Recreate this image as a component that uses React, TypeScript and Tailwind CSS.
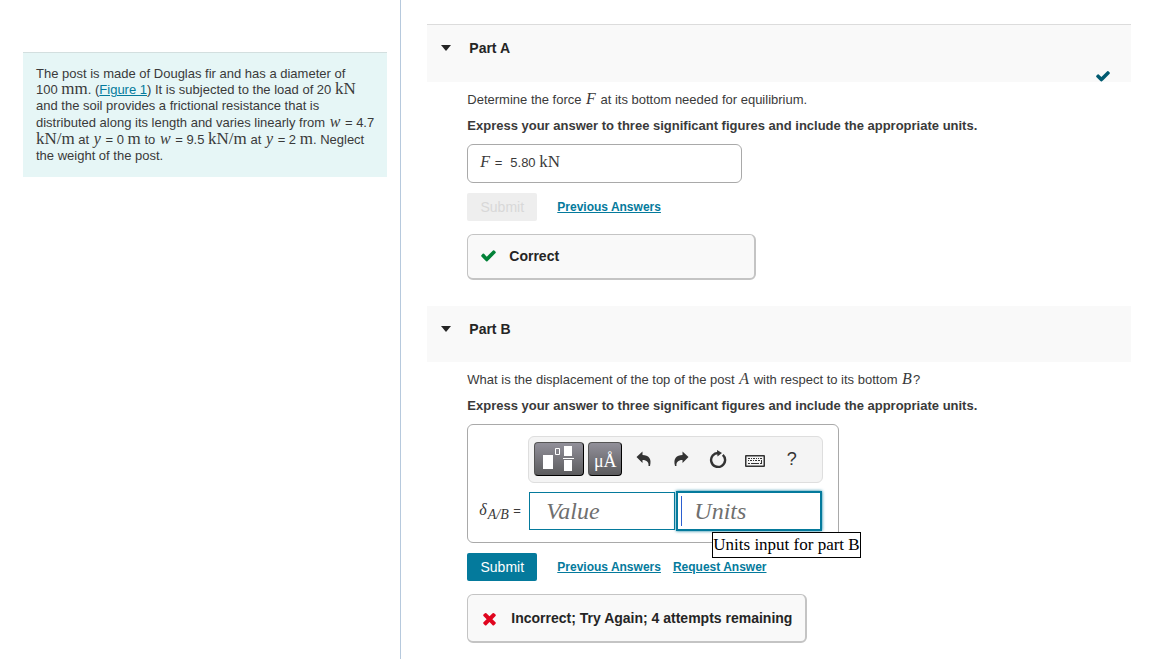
import React from 'react';

const CHECK_PATH =
  'M1671 566q0 40-28 68l-724 724-136 136q-28 28-68 28t-68-28l-136-136-362-362q-28-28-28-68t28-68l136-136q28-28 68-28t68 28l294 295 656-657q28-28 68-28t68 28l136 136q28 28 28 68z';
const TIMES_PATH =
  'M1490 1322q0 40-28 68l-136 136q-28 28-68 28t-68-28l-294-294-294 294q-28 28-68 28t-68-28l-136-136q-28-28-28-68t28-68l294-294-294-294q-28-28-28-68t28-68l136-136q28-28 68-28t68 28l294 294 294-294q28-28 68-28t68 28l136 136q28 28 28 68t-28 68l-294 294 294 294q28 28 28 68z';

type ChildrenProps = { children: React.ReactNode };

// Math variable, e.g. w, y, F
const Var: React.FC<ChildrenProps> = ({ children }) => (
  <i className="mx-px font-['Liberation_Serif',serif] text-[16px] leading-none">{children}</i>
);

// Upright unit, e.g. kN, m
const Unit: React.FC<ChildrenProps> = ({ children }) => (
  <span className="font-['Liberation_Serif',serif] text-[17px] leading-3">{children}</span>
);

const TextLink: React.FC<ChildrenProps> = ({ children }) => (
  <a href="#" className="text-[12px] leading-4 font-bold text-[#047a9c] underline">
    {children}
  </a>
);

const CheckIcon: React.FC<{ className: string }> = ({ className }) => (
  <svg viewBox="0 0 1792 1792" className={className} fill="currentColor" aria-hidden="true">
    <path d={CHECK_PATH} />
  </svg>
);

interface PartProps {
  title: string;
  completed?: boolean;
  children: React.ReactNode;
}

const Part: React.FC<PartProps> = ({ title, completed, children }) => (
  <section>
    <header
      className={`flex justify-between bg-[#f9f9f9] pl-[14px] pr-5 ${
        completed ? 'h-[58px] border-t border-[#dcdcdc]' : 'h-14'
      }`}
    >
      <button type="button" className="flex h-[46px] items-center gap-[18px] text-[14px] font-bold text-[#252525]">
        <svg viewBox="0 0 10 6" className="h-[6px] w-[10px]" fill="currentColor" aria-hidden="true">
          <path d="M0 0h10L5 6z" />
        </svg>
        {title}
      </button>
      {completed && <CheckIcon className="-mb-0.5 h-4 w-4 self-end text-[#005a70]" />}
    </header>
    <div className="pt-[9px] pl-10">{children}</div>
  </section>
);

const toolButton =
  'flex h-[34px] items-center justify-center rounded-[4px] border border-black border-t-[#555] border-l-[#555] bg-linear-to-b from-[#92909a] to-[#5c5c5e] text-white';
const iconButton = 'flex h-[34px] w-[37px] items-center justify-center text-[#333]';

const MathToolbar: React.FC = () => (
  <div
    role="toolbar"
    className="flex h-[47px] items-center rounded-[6px] border border-[#dedede] bg-[#f4f4f4] pb-px pl-[5px]"
  >
    <button type="button" aria-label="Templates" className={`${toolButton} w-[50px]`}>
      <svg viewBox="0 0 34 26" className="h-[26px] w-[34px]" aria-hidden="true">
        <path fill="#fff" d="M1 9h10v14H1zM22 0h8v10h-8zM22 14h8v11h-8zM21 12h11v1H21z" />
        <path fill="none" stroke="#fff" d="M13.5 2.500h4v6h-4z" />
      </svg>
    </button>
    <button
      type="button"
      aria-label="Symbols"
      className={`${toolButton} ml-1 w-[34px] pt-1 font-['Liberation_Serif',serif] text-[18px]`}
    >
      μÅ
    </button>
    <button type="button" aria-label="Undo" className={`${iconButton} ml-[3px]`}>
      <svg viewBox="0 0 16 16" className="h-4 w-4" fill="currentColor" aria-hidden="true">
        <path d="M.5 6l6-5.500V4c6 0 9.500 3.500 7.500 11h-1.500C13 11.500 11 9 6.500 9v3z" />
      </svg>
    </button>
    <button type="button" aria-label="Redo" className={iconButton}>
      <svg viewBox="0 0 16 16" className="h-4 w-4" fill="currentColor" aria-hidden="true">
        <path d="M15.500 6l-6-5.500V4c-6 0-9.500 3.500-7.500 11h1.500C3 11.500 5 9 9.500 9v3z" />
      </svg>
    </button>
    <button type="button" aria-label="Reset" className={iconButton}>
      <svg viewBox="0 0 18 18" className="h-[18px] w-[18px]" aria-hidden="true">
        <path d="M13.800 4.800A7 7 0 1 1 9.500 3" fill="none" stroke="currentColor" strokeWidth="2.4" />
        <path d="M8 0l5 3-4.500 3.500z" fill="currentColor" />
      </svg>
    </button>
    <button type="button" aria-label="Keyboard" className={iconButton}>
      <svg viewBox="0 0 20 12" className="mt-1 h-3 w-5" fill="currentColor" aria-hidden="true">
        <path d="M1 0h18q1 0 1 1v10q0 1-1 1H1q-1 0-1-1V1q0-1 1-1zM1.500 1.500v9h17v-9z" fillRule="evenodd" />
        <path d="M3 3h2v1H3zM6 3h1v1H6zM8 3h2v1H8zM11 3h1v1h-1zM13 3h1v1h-1zM15 3h2v1h-2zM3 5h1v1H3zM5 5h2v1H5zM8 5h1v1H8zM10 5h2v1h-2zM13 5h2v1h-2zM16 5h1v3h-1zM3 8h2v1H3zM6 8h8v1H6zM15 8h2v1h-2z" />
      </svg>
    </button>
    <button type="button" aria-label="Help" className={`${iconButton} text-[18px]`}>
      ?
    </button>
  </div>
);

const inputText =
  "min-w-0 flex-1 bg-transparent font-['Liberation_Serif',serif] text-[24px] italic outline-none placeholder:text-[#6f6f6f] placeholder:opacity-100";

export default function App() {
  return (
    <div className="flex min-h-screen bg-white font-['Liberation_Sans',Arial,sans-serif] text-[13px] leading-[18px] text-[#3a3a3a]">
      <aside className="w-[34.3%] shrink-0 border-r border-[#b6c9dd] pt-[52px] pr-[13px] pl-[23px]">
        <div className="border-t border-[#d3dfdf] bg-[#e6f6f6] pt-[13px] pr-1 pb-[13px] pl-[13px] leading-4">
          The post is made of Douglas fir and has a diameter of <br />
          100 <Unit>mm</Unit>. (
          <a href="#" className="text-[#047a9c] underline">
            Figure 1
          </a>
          ) It is subjected to the load of 20 <Unit>kN</Unit>
          <br />
          and the soil provides a frictional resistance that is
          <br />
          distributed along its length and varies linearly from <Var>w</Var> = 4.7
          <br />
          <Unit>kN/m</Unit> at <Var>y</Var> = 0 <Unit>m</Unit> to <Var>w</Var> = 9.5 <Unit>kN/m</Unit> at{' '}
          <Var>y</Var> = 2 <Unit>m</Unit>. Neglect
          <br />
          the weight of the post.
        </div>
      </aside>

      <main className="min-w-0 flex-1 pt-6 pr-[39px] pl-[26px]">
        <Part title="Part A" completed>
          <p>
            Determine the force <Var>F</Var> at its bottom needed for equilibrium.
          </p>
          <p className="mt-2 font-bold">
            Express your answer to three significant figures and include the appropriate units.
          </p>
          <div className="mt-[9px] flex h-[39px] w-[275px] items-center rounded-[6px] border border-[#a9a9a9] px-[11px] pb-0.5">
            <span className="mr-2">
              <Var>F</Var> =
            </span>
            <span>
              5.80 <Unit>kN</Unit>
            </span>
          </div>
          <div className="mt-[10px] flex items-center gap-5">
            <button type="button" disabled className="h-7 w-[70px] rounded-[2px] bg-[#eee] text-[14px] text-[#d8d8d8]">
              Submit
            </button>
            <TextLink>Previous Answers</TextLink>
          </div>
          <div className="mt-[13px] flex h-[46px] w-[289px] items-center gap-3 rounded-[6px] border border-r-2 border-b-2 border-[#c4c4c4] bg-[#f9f9f9] pb-0.5 pl-3 text-[14px] font-bold text-[#252525]">
            <CheckIcon className="h-[17px] w-[17px] text-[#038238]" />
            Correct
          </div>
        </Part>

        <div className="mt-[26px]">
          <Part title="Part B">
            <p>
              What is the displacement of the top of the post <Var>A</Var> with respect to its bottom <Var>B</Var>?
            </p>
            <p className="mt-2 font-bold">
              Express your answer to three significant figures and include the appropriate units.
            </p>
            <div className="mt-[9px] flex h-[119px] w-[372px] flex-col gap-2 rounded-[6px] border border-[#a9a9a9] py-[11px] pr-[15px] pl-[10px]">
              <div className="pl-[50px]">
                <MathToolbar />
              </div>
              <div className="flex h-10 items-center pr-px">
                <label htmlFor="value" className="w-[51px] shrink-0">
                  <Var>δ</Var>
                  <sub className="mr-px font-['Liberation_Serif',serif] text-[14px] italic">A/B</sub> =
                </label>
                <div className="grid flex-1 grid-cols-2 items-center gap-px">
                  <div className="flex h-[38px] border border-[#047a9c] pl-4">
                    <input id="value" type="text" placeholder="Value" className={inputText} />
                  </div>
                  <div className="relative flex h-10 items-center border-2 border-[#047a9c] pl-[3px] shadow-[0_0_3px_#047a9c]">
                    <span className="mr-3 h-[30px] w-px bg-[#2b5fd0]" />
                    <input
                      type="text"
                      placeholder="Units"
                      aria-label="Units"
                      aria-describedby="units-tip"
                      className={inputText}
                    />
                    <div
                      id="units-tip"
                      role="tooltip"
                      className="absolute top-[39px] left-[34px] z-10 flex h-[26px] items-center border border-black bg-white font-['Liberation_Serif',serif] text-[17px] whitespace-nowrap text-black"
                    >
                      Units input for part B
                    </div>
                  </div>
                </div>
              </div>
            </div>
            <div className="mt-[10px] flex items-center">
              <button type="button" className="mr-5 h-7 w-[70px] rounded-[2px] bg-[#047a9c] text-[14px] text-white">
                Submit
              </button>
              <div className="flex gap-3">
                <TextLink>Previous Answers</TextLink>
                <TextLink>Request Answer</TextLink>
              </div>
            </div>
            <div className="mt-[13px] flex h-[49px] w-[340px] items-center gap-3 rounded-[6px] border border-r-2 border-b-2 border-[#c4c4c4] bg-[#f9f9f9] pl-3 text-[14px] font-bold text-[#252525]">
              <svg viewBox="0 0 1792 1792" className="h-[19px] w-[19px]" fill="#e0061f" aria-hidden="true">
                <path d={TIMES_PATH} />
              </svg>
              Incorrect; Try Again; 4 attempts remaining
            </div>
          </Part>
        </div>
      </main>
    </div>
  );
}
